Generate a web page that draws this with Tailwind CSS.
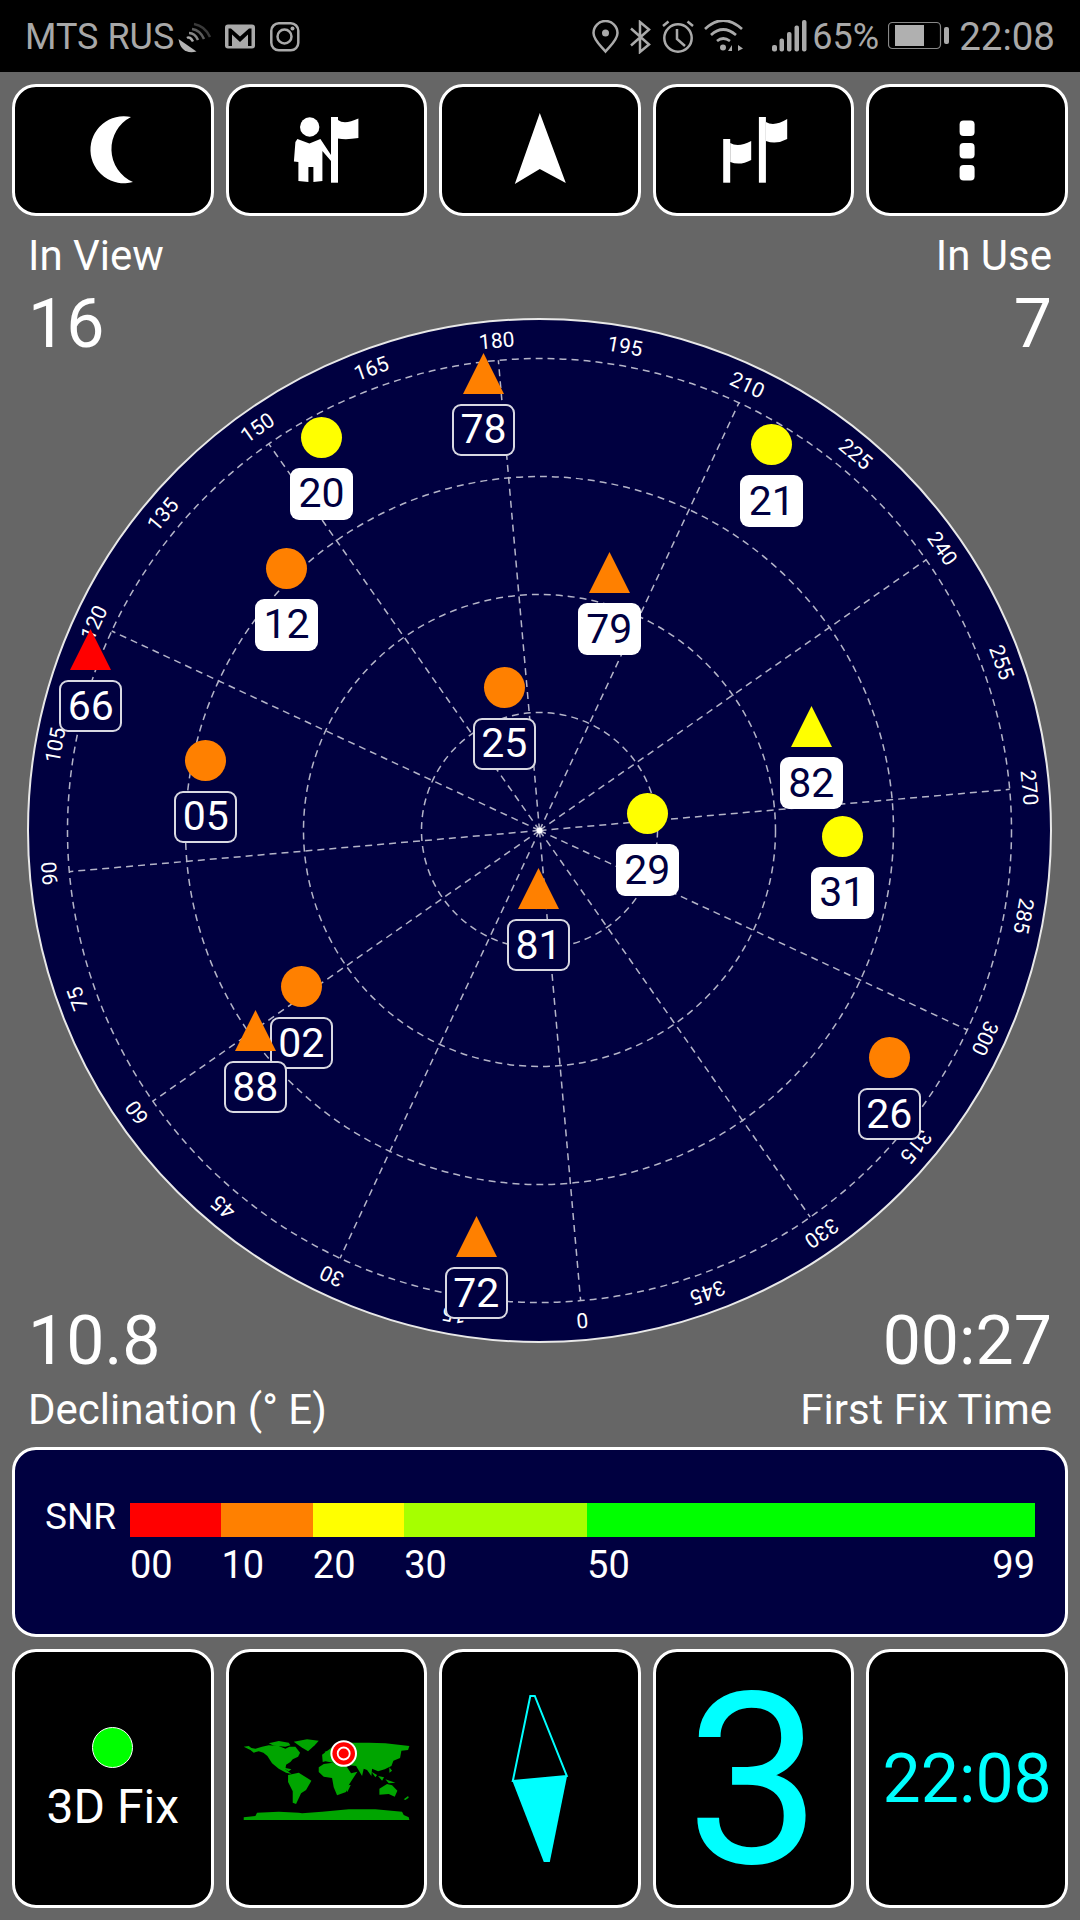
<!DOCTYPE html>
<html lang="en">
<head>
  <meta charset="UTF-8">
  <meta name="viewport" content="width=device-width, initial-scale=1.0">
  <title>GPS Test</title>
  <script src="https://cdn.jsdelivr.net/npm/@tailwindcss/browser@4"></script>
</head>
<body class="w-[1080px] h-[1920px] overflow-hidden bg-[#666666] text-white font-['Roboto',sans-serif]">

  <!-- Status bar -->
  <header class="h-[72px] bg-black flex items-center justify-between pt-[2px] pl-[25px] pr-[25px] text-[#a8a8a8]">
    <div class="flex items-center">
      <span class="text-[36px] leading-none">MTS RUS</span>
      <svg class="ml-[4px] w-[35px] h-[34px]" viewBox="177 20 35 34">
        <path d="M177.500 39 L195.500 51.500 Q180 55 177.500 39Z" fill="#b4b4b4"/>
        <path d="M186 38 Q189 36 192 41.500" fill="none" stroke="#aaa" stroke-width="2.500"/>
        <path d="M188 33 Q194 33 197 40" fill="none" stroke="#888" stroke-width="2.500"/>
        <path d="M191 29 Q199 30 203 39" fill="none" stroke="#5c5c5c" stroke-width="2.500"/>
        <path d="M193 24 Q204 26 209 37" fill="none" stroke="#3a3a3a" stroke-width="2.500"/>
      </svg>
      <svg class="ml-[12px] w-[30px] h-[34px]" viewBox="223.500 20 30 34">
        <rect x="223.500" y="24.500" width="30" height="24" rx="3" fill="#aaa"/>
        <path d="M227 46 V28.500 h2.500 L238.500 36.500 L247.500 28.500 h2.500 V46 h-3.500 V34.500 L238.500 42 L230.500 34.500 V46Z" fill="#000"/>
      </svg>
      <svg class="ml-[15px] w-[30px] h-[34px]" viewBox="269 20 30 34">
        <rect x="270.300" y="23.300" width="27" height="27" rx="7.500" fill="none" stroke="#aaa" stroke-width="2.500"/>
        <circle cx="283.500" cy="36.500" r="7" fill="none" stroke="#aaa" stroke-width="2.500"/>
        <circle cx="291.500" cy="28.500" r="2" fill="#aaa"/>
      </svg>
    </div>
    <div class="flex items-center">
      <svg class="w-[27px] h-[34px]" viewBox="591 20 27 34">
        <path d="M604.500 51.500 C600 46 592.500 40 592.500 33 A12 12 0 0 1 616.500 33 C616.500 40 609 46 604.500 51.500Z" fill="none" stroke="#aaa" stroke-width="2.500"/>
        <circle cx="604.500" cy="33" r="3.500" fill="#aaa"/>
      </svg>
      <svg class="ml-[10px] w-[22px] h-[34px]" viewBox="629 20 22 34">
        <path d="M631 28.500 L649 44.500 L640 52 V22 L649 29.500 L631 45.500" fill="none" stroke="#aaa" stroke-width="2.500"/>
      </svg>
      <svg class="ml-[11px] w-[32px] h-[34px]" viewBox="663 20 32 34">
        <circle cx="679" cy="38" r="13.700" fill="none" stroke="#aaa" stroke-width="2.500"/>
        <path d="M678 29 V39 L686 46 M664 26 L669.500 21.500 M688.500 21.500 L694 26" fill="none" stroke="#aaa" stroke-width="2.500"/>
      </svg>
      <svg class="ml-[10px] w-[40px] h-[34px]" viewBox="705 20 40 34">
        <path d="M706 29 Q724 12 743 29 M712 35 Q724 24 737 35 M718 41 Q724 36 731 41" fill="none" stroke="#aaa" stroke-width="2.700"/>
        <circle cx="724" cy="47.500" r="3" fill="#aaa"/>
        <path d="M733 45 V51 H729Z M739 45 L744 48.500 L739 51Z" fill="#aaa"/>
      </svg>
      <svg class="ml-[27px] w-[36px] h-[34px]" viewBox="771 20 36 34">
        <rect x="772" y="45" width="5" height="6.500" rx="2" fill="#aaa"/>
        <rect x="779.500" y="38.500" width="4.500" height="13" rx="2" fill="#aaa"/>
        <rect x="787" y="32" width="4.500" height="19.500" rx="2" fill="#aaa"/>
        <rect x="794.500" y="25.500" width="4.500" height="26" rx="2" fill="#aaa"/>
        <rect x="802" y="20" width="4.500" height="31.500" rx="2" fill="#aaa"/>
      </svg>
      <span class="ml-[5px] text-[36px] leading-none">65%</span>
      <svg class="ml-[9px] w-[62px] h-[34px]" viewBox="888 20 62 34">
        <rect x="888.500" y="22.500" width="52" height="26" rx="4" fill="none" stroke="#888" stroke-width="1.200"/>
        <rect x="895" y="25" width="29" height="21" fill="#b0b0b0"/>
        <rect x="944" y="27" width="5" height="17" rx="2" fill="#aaa"/>
      </svg>
      <span class="ml-[9px] text-[38.500px] leading-none">22:08</span>
    </div>
  </header>

  <!-- Toolbar -->
  <nav class="mt-[12px] mx-[12px] h-[132px] flex gap-[12px]">
    <button class="flex-1 bg-black border-[3px] border-white rounded-[24px]">
      <svg class="w-full h-full" viewBox="15 87 195.600 126">
        <path d="M131 117 A33.500 33.500 0 1 0 133 182 A36 36 0 0 1 131 117Z" fill="#fff"/>
      </svg>
    </button>
    <button class="flex-1 bg-black border-[3px] border-white rounded-[24px]">
      <svg class="w-full h-full" viewBox="228.600 87 195.600 126">
        <circle cx="309.300" cy="127" r="9.700" fill="#fff"/>
        <path d="M297 139 L309 143.500 L320 139 L330.600 155 V161 L322 151 V181 L313 182 V167 H308 V182 L298 181 V162 L293.500 161.500 L295 142Z" fill="#fff"/>
        <rect x="330.600" y="117" width="7" height="65.700" fill="#fff"/>
        <path d="M337.600 120 Q344 125 358 118.500 V138 Q346 140 337.600 138.500Z" fill="#fff"/>
      </svg>
    </button>
    <button class="flex-1 bg-black border-[3px] border-white rounded-[24px]">
      <svg class="w-full h-full" viewBox="442.200 87 195.600 126">
        <path d="M540 113 L566 183 L540 169 L515 184Z" fill="#fff"/>
      </svg>
    </button>
    <button class="flex-1 bg-black border-[3px] border-white rounded-[24px]">
      <svg class="w-full h-full" viewBox="655.800 87 195.600 126">
        <rect x="723" y="139" width="7" height="43.700" fill="#fff"/>
        <path d="M730 143 Q738 148 751 141 V160 Q740 166 730 162Z" fill="#fff"/>
        <rect x="758.700" y="117" width="7" height="65.700" fill="#fff"/>
        <path d="M765.700 122 Q774 127 787 119 V139 Q776 145 765.700 141Z" fill="#fff"/>
      </svg>
    </button>
    <button class="flex-1 bg-black border-[3px] border-white rounded-[24px]">
      <svg class="w-full h-full" viewBox="869.400 87 195.600 126">
        <rect x="960" y="120.500" width="15" height="15.500" rx="4" fill="#fff"/>
        <rect x="960" y="143" width="15" height="15.500" rx="4" fill="#fff"/>
        <rect x="960" y="165" width="15" height="15.500" rx="4" fill="#fff"/>
      </svg>
    </button>
  </nav>

  <!-- Counts above the radar -->
  <section class="mt-[18px] px-[28px]">
    <div class="flex justify-between text-[42px] leading-[44px]">
      <span>In View</span>
      <span>In Use</span>
    </div>
    <div class="mt-[13px] flex justify-between text-[68px] leading-[66px]">
      <span>16</span>
      <span>7</span>
    </div>
  </section>

  <!-- Radar -->
  <section class="relative -mt-[39px] ml-[27px] w-[1025px] h-[1025px]">
    <svg class="w-full h-full" viewBox="0 0 1025 1025">
      <circle cx="512.500" cy="512.500" r="511.500" fill="#000040" stroke="#e8e8e8" stroke-width="2"/>
      <g fill="none" stroke="#b4b4c8" stroke-width="1.500" stroke-dasharray="7 5">
        <circle cx="512.500" cy="512.500" r="118"/>
        <circle cx="512.500" cy="512.500" r="236"/>
        <circle cx="512.500" cy="512.500" r="354"/>
        <circle cx="512.500" cy="512.500" r="472"/>
        <g transform="rotate(-5 512.500 512.500)">
          <path d="M512.500 512.500 V40.500"/>
          <path d="M512.500 512.500 V40.500" transform="rotate(30 512.500 512.500)"/>
          <path d="M512.500 512.500 V40.500" transform="rotate(60 512.500 512.500)"/>
          <path d="M512.500 512.500 V40.500" transform="rotate(90 512.500 512.500)"/>
          <path d="M512.500 512.500 V40.500" transform="rotate(120 512.500 512.500)"/>
          <path d="M512.500 512.500 V40.500" transform="rotate(150 512.500 512.500)"/>
          <path d="M512.500 512.500 V40.500" transform="rotate(180 512.500 512.500)"/>
          <path d="M512.500 512.500 V40.500" transform="rotate(210 512.500 512.500)"/>
          <path d="M512.500 512.500 V40.500" transform="rotate(240 512.500 512.500)"/>
          <path d="M512.500 512.500 V40.500" transform="rotate(270 512.500 512.500)"/>
          <path d="M512.500 512.500 V40.500" transform="rotate(300 512.500 512.500)"/>
          <path d="M512.500 512.500 V40.500" transform="rotate(330 512.500 512.500)"/>
        </g>
      </g>
      <circle cx="512.500" cy="512.500" r="3" fill="#fff"/>
      <g fill="#ffffff" font-size="21" text-anchor="middle">
        <text x="512.500" y="28" transform="rotate(175 512.500 512.500)">0</text>
        <text x="512.500" y="28" transform="rotate(190 512.500 512.500)">15</text>
        <text x="512.500" y="28" transform="rotate(205 512.500 512.500)">30</text>
        <text x="512.500" y="28" transform="rotate(220 512.500 512.500)">45</text>
        <text x="512.500" y="28" transform="rotate(235 512.500 512.500)">60</text>
        <text x="512.500" y="28" transform="rotate(250 512.500 512.500)">75</text>
        <text x="512.500" y="28" transform="rotate(265 512.500 512.500)">90</text>
        <text x="512.500" y="28" transform="rotate(280 512.500 512.500)">105</text>
        <text x="512.500" y="28" transform="rotate(295 512.500 512.500)">120</text>
        <text x="512.500" y="28" transform="rotate(310 512.500 512.500)">135</text>
        <text x="512.500" y="28" transform="rotate(325 512.500 512.500)">150</text>
        <text x="512.500" y="28" transform="rotate(340 512.500 512.500)">165</text>
        <text x="512.500" y="28" transform="rotate(355 512.500 512.500)">180</text>
        <text x="512.500" y="28" transform="rotate(10 512.500 512.500)">195</text>
        <text x="512.500" y="28" transform="rotate(25 512.500 512.500)">210</text>
        <text x="512.500" y="28" transform="rotate(40 512.500 512.500)">225</text>
        <text x="512.500" y="28" transform="rotate(55 512.500 512.500)">240</text>
        <text x="512.500" y="28" transform="rotate(70 512.500 512.500)">255</text>
        <text x="512.500" y="28" transform="rotate(85 512.500 512.500)">270</text>
        <text x="512.500" y="28" transform="rotate(100 512.500 512.500)">285</text>
        <text x="512.500" y="28" transform="rotate(115 512.500 512.500)">300</text>
        <text x="512.500" y="28" transform="rotate(130 512.500 512.500)">315</text>
        <text x="512.500" y="28" transform="rotate(145 512.500 512.500)">330</text>
        <text x="512.500" y="28" transform="rotate(160 512.500 512.500)">345</text>
      </g>
    </svg>

    <!-- Satellites -->
    <div class="absolute left-[830.7px] top-[719.3px] w-[63px] flex flex-col items-center gap-[10px]">
      <div class="w-[41px] h-[41px] rounded-full bg-[#ff8000]"></div>
      <div class="w-[63px] h-[52px] flex items-center justify-center rounded-[9px] border-2 border-white/85 bg-[#000040] text-[41px] leading-none">26</div>
    </div>
    <div class="absolute left-[417.7px] top-[898.3px] w-[63px] flex flex-col items-center gap-[10px]">
      <svg class="w-[41px] h-[41px]" viewBox="0 0 41 41"><path d="M20.500 0 L41 41 H0Z" fill="#ff8000"/></svg>
      <div class="w-[63px] h-[52px] flex items-center justify-center rounded-[9px] border-2 border-white/85 bg-[#000040] text-[41px] leading-none">72</div>
    </div>
    <div class="absolute left-[425px] top-[34.7px] w-[63px] flex flex-col items-center gap-[10px]">
      <svg class="w-[41px] h-[41px]" viewBox="0 0 41 41"><path d="M20.500 0 L41 41 H0Z" fill="#ff8000"/></svg>
      <div class="w-[63px] h-[52px] flex items-center justify-center rounded-[9px] border-2 border-white/85 bg-[#000040] text-[41px] leading-none">78</div>
    </div>
    <div class="absolute left-[263px] top-[98.6px] w-[63px] flex flex-col items-center gap-[10px]">
      <div class="w-[41px] h-[41px] rounded-full bg-[#ffff00]"></div>
      <div class="w-[63px] h-[52px] flex items-center justify-center rounded-[9px] bg-white text-[#000040] text-[41px] leading-none">20</div>
    </div>
    <div class="absolute left-[713.3px] top-[106.3px] w-[63px] flex flex-col items-center gap-[10px]">
      <div class="w-[41px] h-[41px] rounded-full bg-[#ffff00]"></div>
      <div class="w-[63px] h-[52px] flex items-center justify-center rounded-[9px] bg-white text-[#000040] text-[41px] leading-none">21</div>
    </div>
    <div class="absolute left-[228px] top-[229.7px] w-[63px] flex flex-col items-center gap-[10px]">
      <div class="w-[41px] h-[41px] rounded-full bg-[#ff8000]"></div>
      <div class="w-[63px] h-[52px] flex items-center justify-center rounded-[9px] bg-white text-[#000040] text-[41px] leading-none">12</div>
    </div>
    <div class="absolute left-[550.7px] top-[234px] w-[63px] flex flex-col items-center gap-[10px]">
      <svg class="w-[41px] h-[41px]" viewBox="0 0 41 41"><path d="M20.500 0 L41 41 H0Z" fill="#ff8000"/></svg>
      <div class="w-[63px] h-[52px] flex items-center justify-center rounded-[9px] bg-white text-[#000040] text-[41px] leading-none">79</div>
    </div>
    <div class="absolute left-[32.3px] top-[311.3px] w-[63px] flex flex-col items-center gap-[10px]">
      <svg class="w-[41px] h-[41px]" viewBox="0 0 41 41"><path d="M20.500 0 L41 41 H0Z" fill="#ff0000"/></svg>
      <div class="w-[63px] h-[52px] flex items-center justify-center rounded-[9px] border-2 border-white/85 bg-[#000040] text-[41px] leading-none">66</div>
    </div>
    <div class="absolute left-[445.7px] top-[348.7px] w-[63px] flex flex-col items-center gap-[10px]">
      <div class="w-[41px] h-[41px] rounded-full bg-[#ff8000]"></div>
      <div class="w-[63px] h-[52px] flex items-center justify-center rounded-[9px] border-2 border-white/85 bg-[#000040] text-[41px] leading-none">25</div>
    </div>
    <div class="absolute left-[752.7px] top-[388.3px] w-[63px] flex flex-col items-center gap-[10px]">
      <svg class="w-[41px] h-[41px]" viewBox="0 0 41 41"><path d="M20.500 0 L41 41 H0Z" fill="#ffff00"/></svg>
      <div class="w-[63px] h-[52px] flex items-center justify-center rounded-[9px] bg-white text-[#000040] text-[41px] leading-none">82</div>
    </div>
    <div class="absolute left-[147.3px] top-[421.7px] w-[63px] flex flex-col items-center gap-[10px]">
      <div class="w-[41px] h-[41px] rounded-full bg-[#ff8000]"></div>
      <div class="w-[63px] h-[52px] flex items-center justify-center rounded-[9px] border-2 border-white/85 bg-[#000040] text-[41px] leading-none">05</div>
    </div>
    <div class="absolute left-[588.7px] top-[475.3px] w-[63px] flex flex-col items-center gap-[10px]">
      <div class="w-[41px] h-[41px] rounded-full bg-[#ffff00]"></div>
      <div class="w-[63px] h-[52px] flex items-center justify-center rounded-[9px] bg-white text-[#000040] text-[41px] leading-none">29</div>
    </div>
    <div class="absolute left-[783.7px] top-[497.7px] w-[63px] flex flex-col items-center gap-[10px]">
      <div class="w-[41px] h-[41px] rounded-full bg-[#ffff00]"></div>
      <div class="w-[63px] h-[52px] flex items-center justify-center rounded-[9px] bg-white text-[#000040] text-[41px] leading-none">31</div>
    </div>
    <div class="absolute left-[480px] top-[550px] w-[63px] flex flex-col items-center gap-[10px]">
      <svg class="w-[41px] h-[41px]" viewBox="0 0 41 41"><path d="M20.500 0 L41 41 H0Z" fill="#ff8000"/></svg>
      <div class="w-[63px] h-[52px] flex items-center justify-center rounded-[9px] border-2 border-white/85 bg-[#000040] text-[41px] leading-none">81</div>
    </div>
    <div class="absolute left-[242.7px] top-[648px] w-[63px] flex flex-col items-center gap-[10px]">
      <div class="w-[41px] h-[41px] rounded-full bg-[#ff8000]"></div>
      <div class="w-[63px] h-[52px] flex items-center justify-center rounded-[9px] border-2 border-white/85 bg-[#000040] text-[41px] leading-none">02</div>
    </div>
    <div class="absolute left-[196.7px] top-[692.3px] w-[63px] flex flex-col items-center gap-[10px]">
      <svg class="w-[41px] h-[41px]" viewBox="0 0 41 41"><path d="M20.500 0 L41 41 H0Z" fill="#ff8000"/></svg>
      <div class="w-[63px] h-[52px] flex items-center justify-center rounded-[9px] border-2 border-white/85 bg-[#000040] text-[41px] leading-none">88</div>
    </div>
  </section>

  <!-- Values below the radar -->
  <section class="relative -mt-[35px] px-[28px]">
    <div class="flex justify-between text-[68px] leading-[66px]">
      <span>10.8</span>
      <span>00:27</span>
    </div>
    <div class="mt-[14px] flex justify-between text-[42px] leading-[44px]">
      <span>Declination (° E)</span>
      <span>First Fix Time</span>
    </div>
  </section>

  <!-- SNR legend -->
  <section class="mt-[15px] mx-[12px] h-[190px] bg-[#000040] border-[3px] border-white rounded-[24px] flex items-start pl-[30px] pt-[53px]">
    <span class="w-[85px] -mt-[8px] text-[37px] leading-[44px]">SNR</span>
    <div class="w-[905px]">
      <div class="flex h-[34px]">
        <div class="flex-[10] bg-[#ff0000]"></div>
        <div class="flex-[10] bg-[#ff8000]"></div>
        <div class="flex-[10] bg-[#ffff00]"></div>
        <div class="flex-[20] bg-[#a6ff00]"></div>
        <div class="flex-[49] bg-[#00ff00]"></div>
      </div>
      <div class="mt-[6px] flex text-[38px] leading-[44px]">
        <span class="flex-[10]">00</span>
        <span class="flex-[10]">10</span>
        <span class="flex-[10]">20</span>
        <span class="flex-[20]">30</span>
        <span class="flex-[49] flex justify-between"><span>50</span><span>99</span></span>
      </div>
    </div>
  </section>

  <!-- Bottom cards -->
  <section class="mt-[12px] mx-[12px] h-[259px] flex gap-[12px]">
    <div class="flex-1 bg-black border-[3px] border-white rounded-[24px] flex flex-col items-center pt-[75px]">
      <div class="w-[41px] h-[41px] rounded-full bg-[#00ff00] border-[1.5px] border-white"></div>
      <span class="mt-[12px] text-[48px] leading-[54px]">3D Fix</span>
    </div>
    <div class="flex-1 bg-black border-[3px] border-white rounded-[24px]">
      <svg class="w-full h-full" viewBox="228.600 1652 195.600 253">
        <g transform="translate(235 1730) scale(0.33333)" fill="#00a500">
          <path d="M25 50 L40 48 L48 54 L60 56 L80 50 L100 46 L130 48 L150 56 L162 50 L180 50 L194 68 L188 80 L172 88 L165 96 L152 104 L150 118 L168 132 L152 128 L130 116 L110 100 L96 78 L84 68 L70 64 L55 68 L45 60Z"/>
          <path d="M100 40 L130 33 L160 38 L165 46 L150 50 L115 47Z"/>
          <path d="M175 35 L215 28 L250 32 L238 46 L218 64 L198 52Z"/>
          <path d="M158 135 L190 128 L228 152 L212 180 L197 190 L182 222 L172 218 L172 184 L158 156Z"/>
          <path d="M265 102 L292 98 L308 104 L335 112 L347 130 L366 125 L342 162 L332 186 L305 196 L295 172 L290 144 L265 140 L250 126 L250 112Z"/>
          <path d="M262 96 L260 74 L290 52 L330 38 L400 38 L450 40 L522 48 L518 60 L498 62 L494 84 L474 92 L468 108 L448 118 L428 124 L410 116 L408 138 L395 120 L385 116 L380 138 L362 108 L345 106 L330 110 L300 100 L270 94Z"/>
          <path d="M340 165 L346 165 L336 186 L332 178Z"/>
          <path d="M432 176 L455 162 L470 166 L486 182 L478 200 L460 192 L432 194Z"/>
          <path d="M408 125 L425 135 L420 142Z M428 138 L446 142 L440 152Z M450 148 L480 158 L460 160Z M462 112 L470 122 L462 128Z"/>
          <path d="M505 208 L518 198 L520 203 L510 210Z"/>
          <path d="M268 65 L278 62 L272 78Z"/>
          <path d="M140 112 L168 118 L160 124Z"/>
          <path d="M25 262 L60 258 L65 248 L130 245 L190 248 L200 250 L260 245 L340 238 L420 238 L500 245 L505 255 L520 262 L522 270 L25 270Z"/>
        </g>
        <circle cx="343.300" cy="1753.500" r="13.300" fill="#fff"/>
        <circle cx="343.300" cy="1753.500" r="11.300" fill="#f00"/>
        <circle cx="343.300" cy="1753.500" r="6" fill="none" stroke="#fff" stroke-width="1.800"/>
      </svg>
    </div>
    <div class="flex-1 bg-black border-[3px] border-white rounded-[24px]">
      <svg class="w-full h-full" viewBox="442.200 1652 195.600 253">
        <path d="M530.500 1696 L535 1696 L567 1776 L513 1781Z" fill="none" stroke="#00ffff" stroke-width="2"/>
        <path d="M512.600 1781 L567.300 1776 L550 1862 L544 1862Z" fill="#00ffff"/>
      </svg>
    </div>
    <div class="flex-1 bg-black border-[3px] border-white rounded-[24px] flex items-center justify-center pt-[4px] text-[#00ffff] text-[240px] leading-none">3</div>
    <div class="flex-1 bg-black border-[3px] border-white rounded-[24px] flex items-center justify-center text-[#00ffff] text-[68px] leading-none">22:08</div>
  </section>
</body>
</html>
